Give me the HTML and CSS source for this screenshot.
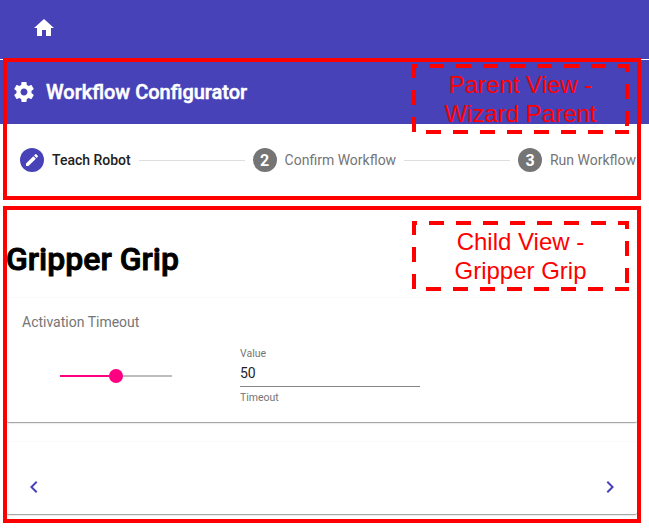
FILE: index.html
```html
<!DOCTYPE html>
<html lang="en">
<head>
<meta charset="utf-8">
<title>Workflow Configurator</title>
<link rel="stylesheet" href="styles.css">
</head>
<body>
<header class="topbar">
  <svg class="icon home" viewBox="0 0 24 24"><path d="M10 20v-6h4v6h5v-8h3L12 3 2 12h3v8z"/></svg>
</header>
<div class="titlebar">
  <svg class="icon" viewBox="0 0 24 24"><path d="M19.43 12.98c.04-.32.07-.64.07-.98s-.03-.66-.07-.98l2.11-1.65c.19-.15.24-.42.12-.64l-2-3.46c-.12-.22-.39-.3-.61-.22l-2.49 1c-.52-.4-1.08-.73-1.69-.98l-.38-2.65C14.46 2.18 14.25 2 14 2h-4c-.25 0-.46.18-.49.42l-.38 2.65c-.61.25-1.17.59-1.69.98l-2.49-1c-.23-.09-.49 0-.61.22l-2 3.46c-.13.22-.07.49.12.64l2.11 1.65c-.04.32-.07.65-.07.98s.03.66.07.98l-2.11 1.65c-.19.15-.24.42-.12.64l2 3.46c.12.22.39.3.61.22l2.49-1c.52.4 1.08.73 1.69.98l.38 2.65c.03.24.24.42.49.42h4c.25 0 .46-.18.49-.42l.38-2.65c.61-.25 1.17-.59 1.69-.98l2.49 1c.23.09.49 0 .61-.22l2-3.46c.12-.22.07-.49-.12-.64l-2.11-1.65zM12 15.5c-1.93 0-3.500-1.570-3.500-3.500s1.570-3.500 3.500-3.500 3.500 1.570 3.500 3.500-1.570 3.500-3.500 3.500z"/></svg>
  <span class="title">Workflow Configurator</span>
</div>
<nav class="stepper">
  <div class="step active">
    <span class="badge"><svg class="pencil" viewBox="0 0 24 24"><path d="M3 17.25V21h3.750L17.810 9.940l-3.750-3.750L3 17.250zM20.710 7.040c.39-.39.39-1.020 0-1.410l-2.340-2.340c-.39-.39-1.020-.39-1.410 0l-1.830 1.830 3.750 3.750 1.830-1.830z"/></svg></span>
    <span class="step-label">Teach Robot</span>
  </div>
  <span class="connector"></span>
  <div class="step">
    <span class="badge">2</span>
    <span class="step-label">Confirm Workflow</span>
  </div>
  <span class="connector"></span>
  <div class="step">
    <span class="badge">3</span>
    <span class="step-label">Run Workflow</span>
  </div>
</nav>
<main class="content">
  <h1>Gripper Grip</h1>
  <section class="card settings">
    <div class="card-title">Activation Timeout</div>
    <div class="controls">
      <div class="slider"><span class="thumb"></span></div>
      <div class="field">
        <span class="field-label">Value</span>
        <span class="field-value">50</span>
        <span class="field-hint">Timeout</span>
      </div>
    </div>
  </section>
  <section class="card pager">
    <svg class="chevron" viewBox="0 0 24 24"><path d="M15.410 7.410L14 6l-6 6 6 6 1.410-1.410L10.830 12z"/></svg>
    <svg class="chevron" viewBox="0 0 24 24"><path d="M10 6L8.590 7.410 13.170 12l-4.580 4.590L10 18l6-6z"/></svg>
  </section>
</main>

<div class="frame parent-frame"></div>
<div class="frame child-frame"></div>
<div class="note parent-note">
  <svg class="dashes" viewBox="0 0 217 70"><path d="M218 68H2V2H215V68"/></svg>
  <span>Parent View -<br>Wizard Parent</span>
</div>
<div class="note child-note">
  <svg class="dashes" viewBox="0 0 217 70"><path d="M218 68H2V2H215V68"/></svg>
  <span>Child View -<br>Gripper Grip</span>
</div>
</body>
</html>
```
FILE: styles.css
```css
* { box-sizing: border-box; }
body {
  margin: 0;
  width: 649px;
  height: 528px;
  overflow: hidden;
  position: relative;
  background: #fff;
  font-family: Roboto, sans-serif;
}
svg { display: block; flex: none; }
.topbar, .titlebar {
  display: flex;
  align-items: center;
  background: #4842b8;
}
.topbar { height: 59px; padding: 0 32px 3px; }
.titlebar { height: 64px; margin-top: 1px; padding: 0 12px; }
.icon { width: 24px; height: 24px; fill: #fff; }
.title {
  margin-left: 10px;
  font-size: 20px;
  font-weight: 500;
  -webkit-text-stroke: 0.5px #fff;
  color: #fff;
}
.stepper {
  display: flex;
  align-items: center;
  height: 72px;
  width: 636px;
  padding-left: 20px;
}
.step { display: flex; align-items: center; gap: 8px; white-space: nowrap; }
.badge {
  display: flex;
  align-items: center;
  justify-content: center;
  width: 24px;
  height: 24px;
  border-radius: 50%;
  background: #757575;
  color: #fff;
  font-size: 16px;
  font-weight: 700;
}
.active .badge { background: #4842b8; }
.pencil { width: 16px; height: 16px; fill: #fff; }
.step-label { font-size: 14px; color: #757575; }
.active .step-label { font-weight: 500; color: #212121; }
.connector { flex: 1; height: 1px; margin: 0 8px; background: #dedede; }
.content { padding: 0 12px 0 7px; }
h1 {
  margin: 0 0 0 -1px;
  height: 101px;
  padding-top: 44px;
  font-size: 32px;
  line-height: 38px;
  font-weight: 500;
  -webkit-text-stroke: 0.9px #000;
  color: #000;
}
.card {
  border-top: 1px solid #fafafa;
  border-bottom: 1px solid #a6a6a6;
  border-radius: 2px;
  box-shadow: 0 1px 1px #ececec;
}
.settings { height: 126px; padding: 14px 15px 0; }
.card-title { font-size: 14px; line-height: 20px; color: #757575; }
.controls { display: flex; padding: 15px 0 0 38px; }
.slider {
  display: flex;
  align-items: center;
  justify-content: center;
  width: 112px;
  height: 2px;
  margin: 28px 68px 0 0;
  background: linear-gradient(to right, #ff0080 50%, #bdbdbd 50%);
}
.thumb { flex: none; width: 14px; height: 14px; border-radius: 50%; background: #ff0080; }
.field { display: flex; flex-direction: column; width: 180px; color: #757575; }
.field-label { font-size: 10.5px; line-height: 14px; }
.field-value {
  height: 26px;
  padding-top: 3px;
  border-bottom: 1px solid #858585;
  font-size: 14px;
  line-height: 18px;
  color: #1f1f1f;
}
.field-hint { margin-top: 4px; font-size: 10.5px; line-height: 14px; }
.pager {
  display: flex;
  justify-content: space-between;
  height: 74px;
  margin-top: 18px;
  padding: 33px 15px 0;
}
.chevron { width: 24px; height: 24px; fill: #4842b8; }
.frame {
  position: absolute;
  left: 3px;
  width: 638px;
  border: 4px solid #f00;
}
.parent-frame { top: 58px; height: 142px; }
.child-frame { top: 206px; height: 317px; }
.note {
  position: absolute;
  left: 412px;
  width: 217px;
  height: 70px;
  padding-top: 6px;
  text-align: center;
  font: 24px/29px "Liberation Sans", sans-serif;
  color: #f00;
}
.parent-note { top: 64px; }
.child-note { top: 221px; }
.dashes {
  position: absolute;
  left: 0;
  top: 0;
  width: 217px;
  height: 70px;
  fill: none;
  stroke: #f00;
  stroke-width: 4;
  stroke-dasharray: 15 12;
}
```
